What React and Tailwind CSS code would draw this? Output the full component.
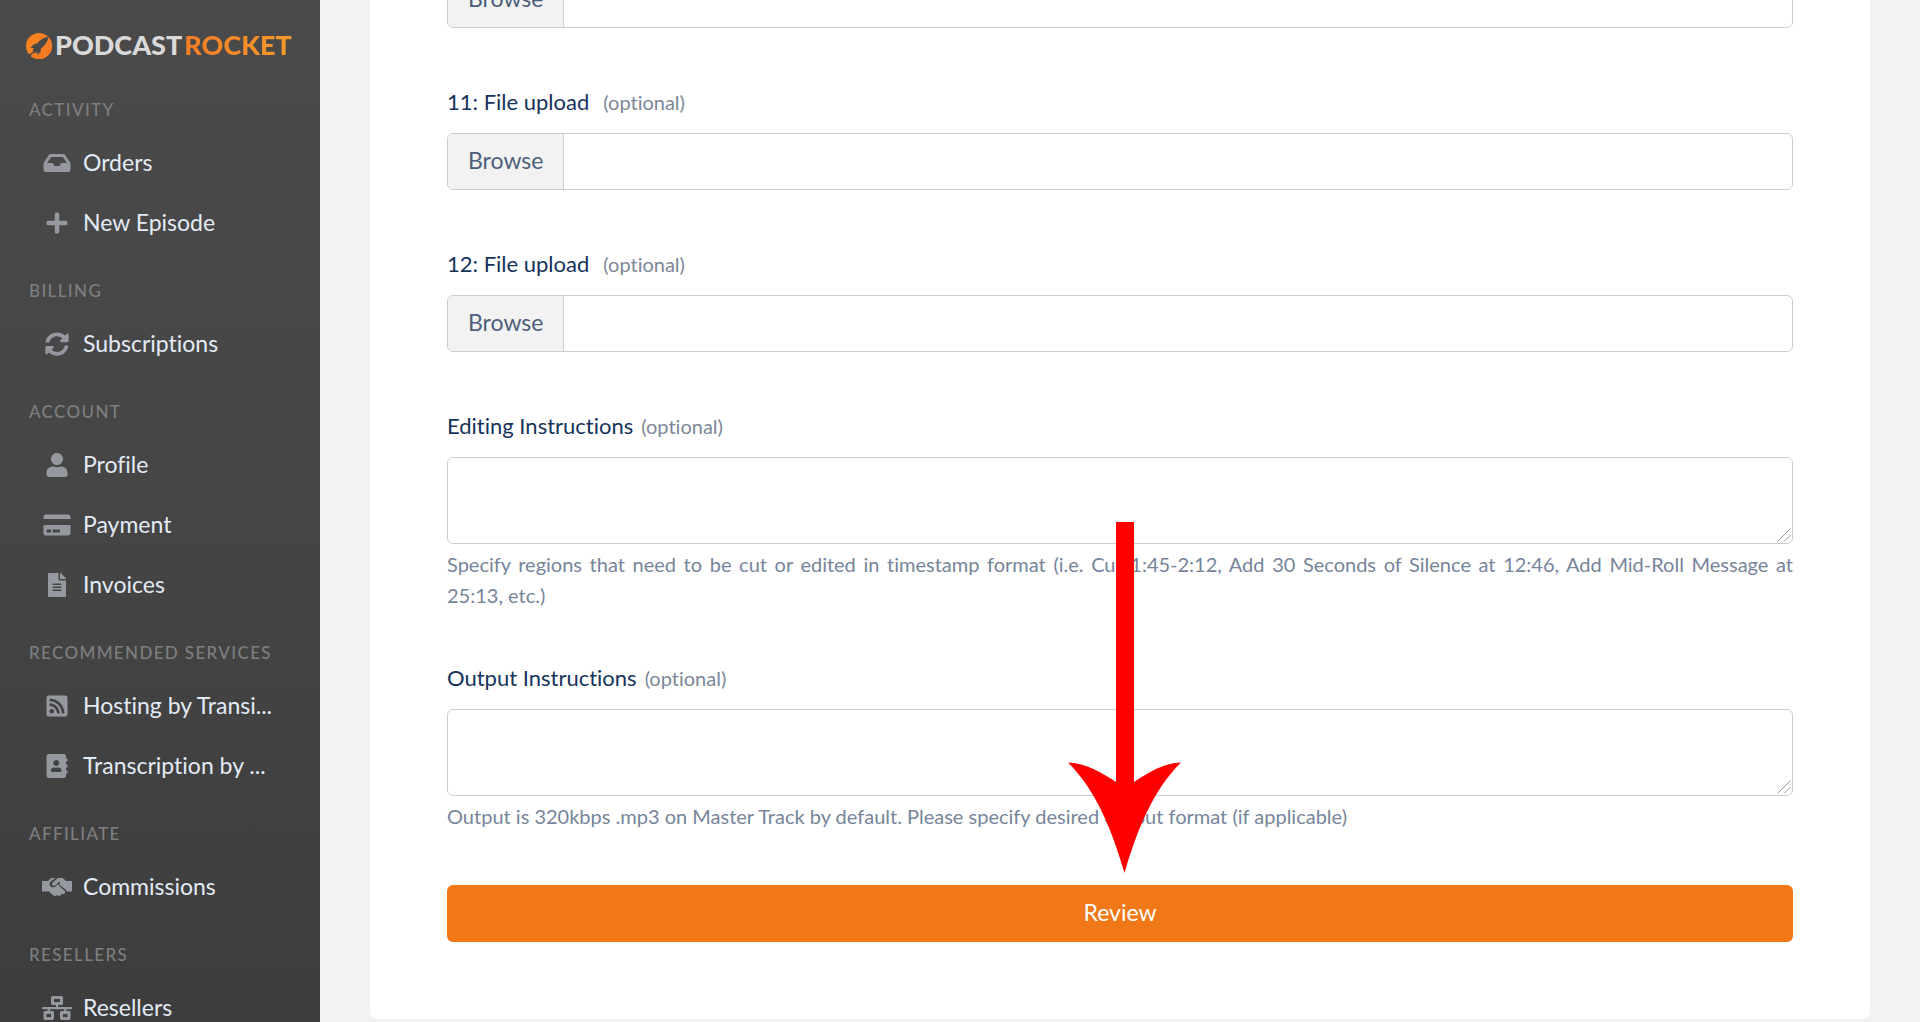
import React from 'react';
import {
    FaInbox,
    FaPlus,
    FaSyncAlt,
    FaUser,
    FaCreditCard,
    FaFileAlt,
    FaRssSquare,
    FaAddressBook,
    FaNetworkWired
} from 'react-icons/fa';

const HandshakeIcon = ({ className }) => (
    <svg viewBox="0 0 640 512" fill="currentColor" className={className}>
        <path d="M434.7 64h-85.900c-8 0-15.700 3-21.600 8.400l-98.300 90c-.1.1-.2.3-.3.4-16.600 15.600-16.300 40.500-2.100 56 12.700 13.900 39.400 17.600 56.100 2.700.1-.1.3-.1.4-.2l79.900-73.200c6.500-5.900 16.700-5.500 22.600 1 6 6.500 5.500 16.600-1 22.600l-26.100 23.900L504 313.800c14 11.500 22 24 24 38.200H640V128H512l-54.700-54.600c-5.900-6-14.100-9.400-22.600-9.400z" />
        <path d="M334.900 199.100l-49.800 45.600c-30 27.400-76.400 25.300-103.800-4.600-27.400-30.100-25.200-76.500 4.700-103.900L289.700 64H205.300c-8.500 0-16.600 3.400-22.600 9.400L128 128H0v224h146.300l90.500 81.900c27.400 22.300 67.700 18.100 90-9.300l.2-.2 17.900 15.500c15.900 13 39.400 10.500 52.300-5.400l31.400-38.600 5.400 4.400c13.700 11.100 33.900 9.100 45-4.700l9.500-11.700c11.200-13.800 9.100-33.900-4.600-45.100z" />
    </svg>
);

const sections = [
    {
        title: 'Activity',
        items: [
            { label: 'Orders', icon: FaInbox },
            { label: 'New Episode', icon: FaPlus }
        ]
    },
    {
        title: 'Billing',
        items: [{ label: 'Subscriptions', icon: FaSyncAlt }]
    },
    {
        title: 'Account',
        items: [
            { label: 'Profile', icon: FaUser },
            { label: 'Payment', icon: FaCreditCard },
            { label: 'Invoices', icon: FaFileAlt }
        ]
    },
    {
        title: 'Recommended Services',
        items: [
            { label: 'Hosting by Transi...', icon: FaRssSquare },
            { label: 'Transcription by ...', icon: FaAddressBook }
        ]
    },
    {
        title: 'Affiliate',
        items: [{ label: 'Commissions', icon: HandshakeIcon }]
    },
    {
        title: 'Resellers',
        items: [{ label: 'Resellers', icon: FaNetworkWired }]
    }
];

const Logo = () => (
    <a href="#" className="flex items-center h-[72px] pt-5 pl-[26px] text-[27px] font-black leading-none">
        <svg viewBox="0 0 26 26" className="w-[26px] h-[26px] mr-[3px] shrink-0">
            <circle cx="13" cy="13" r="13" fill="#f58220" />
            <path d="M3.800 22.200L22.200 3.800A13 13 0 0 1 3.800 22.200Z" fill="#f37b24" />
            <path
                d="M22.500 3.500C18 4.200 14 7 11 10.500L7.500 11.500L4.500 15L8 15L6.500 17.500L7.500 18.500L3 21.500L1.500 23L3.500 24.500L6 21L9 19.500L10 20L11.500 19L11.500 22L14.500 19L15 15.500C19 12.500 22 8 22.500 3.500Z"
                fill="#484848"
            />
        </svg>
        <span className="pb-1 text-[#d9d9d9]">PODCAST</span>
        <span className="ml-0.5 pb-1 bg-linear-to-r from-[#f47c25] to-[#f79a2b] bg-clip-text text-transparent">ROCKET</span>
    </a>
);

const Sidebar = () => (
    <aside className="w-80 h-screen sticky top-0 shrink-0 overflow-hidden bg-linear-to-b from-[#4a4a4a] via-[#454545] to-[#3d3d3d]">
        <Logo />
        <nav>
            {sections.map((s) => (
                <section key={s.title}>
                    <h2 className="pt-[26px] pb-[11px] pl-[29px] text-[17px] leading-6 font-medium uppercase tracking-[0.08em] text-[#7d7e80]">
                        {s.title}
                    </h2>
                    {s.items.map((item) => (
                        <a key={item.label} href="#" className="flex items-center h-[60px] pl-[42px] text-[#e3ebf6]">
                            <item.icon className="w-[30px] h-6 mr-[11px] shrink-0 text-[#95999f]" />
                            <span className="pb-0.5 text-[23px] leading-none whitespace-nowrap">{item.label}</span>
                        </a>
                    ))}
                </section>
            ))}
        </nav>
    </aside>
);

const FieldLabel = ({ id, text, wide }) => (
    <label htmlFor={id} className="flex items-baseline h-[30px] mb-[15px] leading-7 text-[22px] text-[#16335b]">
        {text}
        <span className={`text-[20px] text-[#7c8798] ${wide ? 'ml-[14px]' : 'ml-2'}`}>(optional)</span>
    </label>
);

const FileField = ({ id, text }) => (
    <div className="mb-[60px]">
        {text && <FieldLabel id={id} text={text} wide />}
        <label className="relative flex h-[57px] rounded-md border border-[#c8ced6] overflow-hidden cursor-pointer">
            <input id={id} type="file" className="sr-only" />
            <span className="flex items-center px-5 pb-0.5 border-r border-[#c8ced6] bg-[#f2f2f2] text-[23px] leading-none text-[#4d5f7a]">
                Browse
            </span>
        </label>
    </div>
);

const TextField = ({ id, text, hint }) => (
    <div className="mb-[53px]">
        <FieldLabel id={id} text={text} />
        <div className="relative">
            <textarea
                id={id}
                className="block w-full h-[87px] px-5 py-3 rounded-md border border-[#c8ced6] bg-white resize-none text-[22px] text-[#12263f]"
            />
            <svg viewBox="0 0 14 14" className="absolute right-0.5 bottom-0.5 w-[14px] h-[14px] pointer-events-none">
                <path d="M0.500 13.500L13.500 0.500M7 13.500L13.500 7" stroke="#9a9a9a" fill="none" />
            </svg>
        </div>
        <p className="mt-[5px] text-[20px] leading-[31px] text-justify text-[#76859a]">{hint}</p>
    </div>
);

const Arrow = () => (
    <svg viewBox="0 0 113 351" className="absolute left-[698px] bottom-[146px] w-[113px] h-[351px] pointer-events-none">
        <path
            d="M48 0H66V260C80 251 95 241 113 240.500C85 268 69 308 56.500 351C44 308 28 268 0 240.500C18 241 34 251 48 260Z"
            fill="#ff0000"
        />
    </svg>
);

const App = () => {
    return (
        <div className="flex min-h-screen bg-[#f2f2f2] font-[Lato,sans-serif] [font-variant-ligatures:none]">
            <Sidebar />
            <main className="flex-1 min-w-0 px-[50px] pb-1 overflow-hidden">
                <form className="relative px-[77px] pb-[77px] bg-white rounded-b-lg">
                    <div className="-mt-[29px]">
                        <FileField id="file-10" />
                        <FileField id="file-11" text="11: File upload" />
                        <FileField id="file-12" text="12: File upload" />
                    </div>
                    <TextField
                        id="editing"
                        text="Editing Instructions"
                        hint={'Specify regions that need to be cut or edited in timestamp format (i.e. Cut 1:45-2:12, Add 30 Seconds of Silence at 12:46, Add Mid-Roll Message at 25:13,\u00a0etc.)'}
                    />
                    <TextField
                        id="output"
                        text="Output Instructions"
                        hint="Output is 320kbps .mp3 on Master Track by default. Please specify desired output format (if applicable)"
                    />
                    <button type="button" className="block w-full h-[57px] pb-0.5 rounded-md bg-[#f07819] text-[23px] text-white">
                        Review
                    </button>
                    <Arrow />
                </form>
            </main>
        </div>
    );
};

export default App;
